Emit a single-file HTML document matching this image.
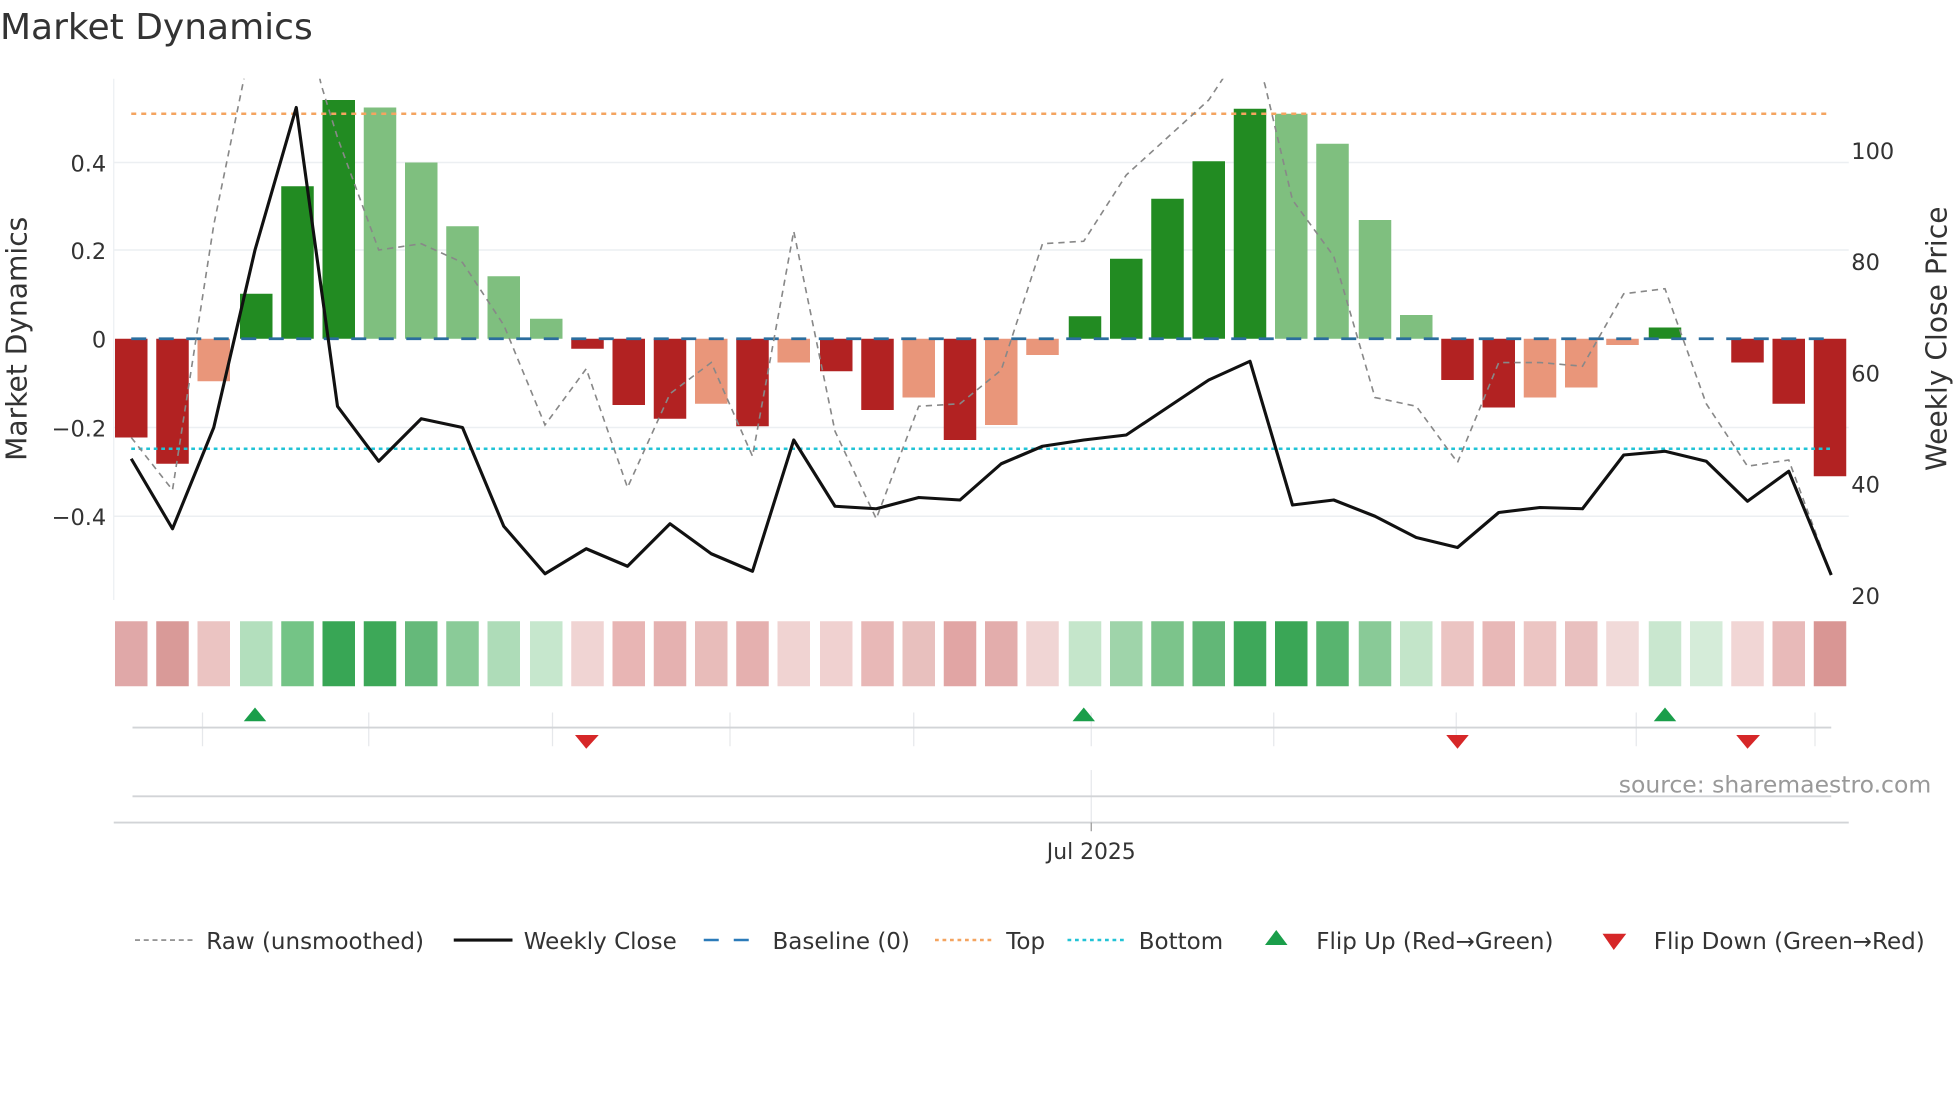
<!DOCTYPE html>
<html><head><meta charset="utf-8"><style>
html,body{margin:0;padding:0;background:#fff;width:1960px;height:1102px;overflow:hidden}
svg{display:block}
text{font-family:"DejaVu Sans","Liberation Sans",sans-serif;fill:#333}
</style></head><body>
<svg width="1960" height="1102" viewBox="0 0 1568 881.6" xmlns="http://www.w3.org/2000/svg">
<defs><clipPath id="pc"><rect x="91" y="63" width="1388" height="420"/></clipPath></defs>
<text x="0" y="31" font-size="28.8">Market Dynamics</text>
<g stroke="#eceff2" stroke-width="1.2">
<line x1="91" y1="130" x2="1479" y2="130"/><line x1="91" y1="200" x2="1479" y2="200"/>
<line x1="91" y1="342" x2="1479" y2="342"/><line x1="91" y1="413" x2="1479" y2="413"/>
</g>
<line x1="91" y1="63" x2="91" y2="480" stroke="#eceff2"/>
<g font-size="18" text-anchor="end">
<text x="85" y="137">0.4</text><text x="85" y="207">0.2</text><text x="85" y="278">0</text>
<text x="85" y="349">−0.2</text><text x="85" y="420">−0.4</text>
</g>
<g font-size="18">
<text x="1481" y="127">100</text><text x="1481" y="216">80</text><text x="1481" y="305">60</text>
<text x="1481" y="394">40</text><text x="1481" y="483">20</text>
</g>
<text transform="translate(21,271) rotate(-90)" font-size="22.5" text-anchor="middle">Market Dynamics</text>
<text transform="translate(1557,271) rotate(-90)" font-size="22.5" text-anchor="middle">Weekly Close Price</text>
<g>
<rect x="92" y="271" width="26" height="79" fill="#b22222"/>
<rect x="125" y="271" width="26" height="100" fill="#b22222"/>
<rect x="158" y="271" width="26" height="34" fill="#e9967a"/>
<rect x="192" y="235" width="26" height="36" fill="#228b22"/>
<rect x="225" y="149" width="26" height="122" fill="#228b22"/>
<rect x="258" y="80" width="26" height="191" fill="#228b22"/>
<rect x="291" y="86" width="26" height="185" fill="#7fbf7f"/>
<rect x="324" y="130" width="26" height="141" fill="#7fbf7f"/>
<rect x="357" y="181" width="26" height="90" fill="#7fbf7f"/>
<rect x="390" y="221" width="26" height="50" fill="#7fbf7f"/>
<rect x="424" y="255" width="26" height="16" fill="#7fbf7f"/>
<rect x="457" y="271" width="26" height="8" fill="#b22222"/>
<rect x="490" y="271" width="26" height="53" fill="#b22222"/>
<rect x="523" y="271" width="26" height="64" fill="#b22222"/>
<rect x="556" y="271" width="26" height="52" fill="#e9967a"/>
<rect x="589" y="271" width="26" height="70" fill="#b22222"/>
<rect x="622" y="271" width="26" height="19" fill="#e9967a"/>
<rect x="656" y="271" width="26" height="26" fill="#b22222"/>
<rect x="689" y="271" width="26" height="57" fill="#b22222"/>
<rect x="722" y="271" width="26" height="47" fill="#e9967a"/>
<rect x="755" y="271" width="26" height="81" fill="#b22222"/>
<rect x="788" y="271" width="26" height="69" fill="#e9967a"/>
<rect x="821" y="271" width="26" height="13" fill="#e9967a"/>
<rect x="855" y="253" width="26" height="18" fill="#228b22"/>
<rect x="888" y="207" width="26" height="64" fill="#228b22"/>
<rect x="921" y="159" width="26" height="112" fill="#228b22"/>
<rect x="954" y="129" width="26" height="142" fill="#228b22"/>
<rect x="987" y="87" width="26" height="184" fill="#228b22"/>
<rect x="1020" y="91" width="26" height="180" fill="#7fbf7f"/>
<rect x="1053" y="115" width="26" height="156" fill="#7fbf7f"/>
<rect x="1087" y="176" width="26" height="95" fill="#7fbf7f"/>
<rect x="1120" y="252" width="26" height="19" fill="#7fbf7f"/>
<rect x="1153" y="271" width="26" height="33" fill="#b22222"/>
<rect x="1186" y="271" width="26" height="55" fill="#b22222"/>
<rect x="1219" y="271" width="26" height="47" fill="#e9967a"/>
<rect x="1252" y="271" width="26" height="39" fill="#e9967a"/>
<rect x="1285" y="271" width="26" height="5" fill="#e9967a"/>
<rect x="1319" y="262" width="26" height="9" fill="#228b22"/>
<rect x="1385" y="271" width="26" height="19" fill="#b22222"/>
<rect x="1418" y="271" width="26" height="52" fill="#b22222"/>
<rect x="1451" y="271" width="26" height="110" fill="#b22222"/>
</g>
<line x1="105" y1="91" x2="1465" y2="91" stroke="#f4a460" stroke-width="2" stroke-dasharray="4,4"/>
<line x1="105" y1="359" x2="1465" y2="359" stroke="#22c3d6" stroke-width="2" stroke-dasharray="3,3"/>
<line x1="105" y1="271" x2="1465" y2="271" stroke="#2b6d9e" stroke-width="2.2" stroke-dasharray="12,10"/>
<polyline clip-path="url(#pc)" fill="none" stroke="#888" stroke-width="1.3" stroke-dasharray="5,4" points="105,350 138,392 171,180 204,20 237,-20 257,68 270,110 303,200 337,195 370,210 403,260 436,340 469,295 502,390 536,315 569,290 602,365 635,185 668,345 701,415 735,325 768,323 801,296 834,195 867,193 901,140 934,110 967,80 1000,30 1012,68 1034,160 1067,205 1100,318 1133,325 1166,370 1199,290 1232,290 1266,293 1299,235 1332,231 1365,323 1398,373 1431,368 1465,460"/>
<polyline fill="none" stroke="#111" stroke-width="2.5" stroke-linejoin="round" points="105,367 138,423 171,342 204,200 237,86 270,325 303,369 337,335 370,342 403,421 436,459 469,439 502,453 536,419 569,443 602,457 635,352 668,405 701,407 735,398 768,400 801,371 834,357 867,352 901,348 934,326 967,304 1000,289 1034,404 1067,400 1100,413 1133,430 1166,438 1199,410 1232,406 1266,407 1299,364 1332,361 1365,369 1398,401 1431,377 1465,460"/>
<g>
<rect x="92" y="497" width="26" height="52" fill="#e0a8a8"/>
<rect x="125" y="497" width="26" height="52" fill="#d99a98"/>
<rect x="158" y="497" width="26" height="52" fill="#ebc4c2"/>
<rect x="192" y="497" width="26" height="52" fill="#b3dfbd"/>
<rect x="225" y="497" width="26" height="52" fill="#74c486"/>
<rect x="258" y="497" width="26" height="52" fill="#38a655"/>
<rect x="291" y="497" width="26" height="52" fill="#3da858"/>
<rect x="324" y="497" width="26" height="52" fill="#65b97a"/>
<rect x="357" y="497" width="26" height="52" fill="#8acb98"/>
<rect x="390" y="497" width="26" height="52" fill="#aedcb8"/>
<rect x="424" y="497" width="26" height="52" fill="#c6e7cd"/>
<rect x="457" y="497" width="26" height="52" fill="#f0d4d3"/>
<rect x="490" y="497" width="26" height="52" fill="#e8b5b4"/>
<rect x="523" y="497" width="26" height="52" fill="#e5b1b0"/>
<rect x="556" y="497" width="26" height="52" fill="#e8bcba"/>
<rect x="589" y="497" width="26" height="52" fill="#e5b0af"/>
<rect x="622" y="497" width="26" height="52" fill="#f0d3d2"/>
<rect x="656" y="497" width="26" height="52" fill="#f0d1d0"/>
<rect x="689" y="497" width="26" height="52" fill="#e8b8b7"/>
<rect x="722" y="497" width="26" height="52" fill="#e8c0be"/>
<rect x="755" y="497" width="26" height="52" fill="#e1a5a4"/>
<rect x="788" y="497" width="26" height="52" fill="#e3adac"/>
<rect x="821" y="497" width="26" height="52" fill="#f0d5d4"/>
<rect x="855" y="497" width="26" height="52" fill="#c5e6cb"/>
<rect x="888" y="497" width="26" height="52" fill="#9fd4aa"/>
<rect x="921" y="497" width="26" height="52" fill="#7cc48b"/>
<rect x="954" y="497" width="26" height="52" fill="#62b777"/>
<rect x="987" y="497" width="26" height="52" fill="#3ea85a"/>
<rect x="1020" y="497" width="26" height="52" fill="#3aa656"/>
<rect x="1053" y="497" width="26" height="52" fill="#58b46f"/>
<rect x="1087" y="497" width="26" height="52" fill="#89ca97"/>
<rect x="1120" y="497" width="26" height="52" fill="#c3e5c9"/>
<rect x="1153" y="497" width="26" height="52" fill="#ebc4c2"/>
<rect x="1186" y="497" width="26" height="52" fill="#e8b8b7"/>
<rect x="1219" y="497" width="26" height="52" fill="#ecc5c3"/>
<rect x="1252" y="497" width="26" height="52" fill="#e9c0bf"/>
<rect x="1285" y="497" width="26" height="52" fill="#f1dad9"/>
<rect x="1319" y="497" width="26" height="52" fill="#c9e7cf"/>
<rect x="1352" y="497" width="26" height="52" fill="#d5ecd9"/>
<rect x="1385" y="497" width="26" height="52" fill="#f1d6d5"/>
<rect x="1418" y="497" width="26" height="52" fill="#e8bab9"/>
<rect x="1451" y="497" width="26" height="52" fill="#d99694"/>
</g>
<g stroke="#e6e8eb" stroke-width="1">
<line x1="162" y1="570" x2="162" y2="597"/><line x1="295" y1="570" x2="295" y2="597"/>
<line x1="442" y1="570" x2="442" y2="597"/><line x1="584" y1="570" x2="584" y2="597"/>
<line x1="731" y1="570" x2="731" y2="597"/><line x1="873" y1="570" x2="873" y2="597"/>
<line x1="1019" y1="570" x2="1019" y2="597"/><line x1="1165" y1="570" x2="1165" y2="597"/>
<line x1="1309" y1="570" x2="1309" y2="597"/><line x1="1452" y1="570" x2="1452" y2="597"/>
<line x1="873" y1="616" x2="873" y2="658"/>
</g>
<line x1="106" y1="582" x2="1465" y2="582" stroke="#d2d4d7" stroke-width="1.5"/>
<g fill="#1a9e4a">
<polygon points="204,566 213,577 195,577"/><polygon points="867,566 876,577 858,577"/><polygon points="1332,566 1341,577 1323,577"/>
</g>
<g fill="#d62728">
<polygon points="460,588 479,588 469,599"/><polygon points="1157,588 1175,588 1166,599"/><polygon points="1389,588 1408,588 1398,599"/>
</g>
<line x1="106" y1="637" x2="1465" y2="637" stroke="#d2d4d7" stroke-width="1.5"/>
<line x1="91" y1="658" x2="1479" y2="658" stroke="#d2d4d7" stroke-width="1.5"/>
<line x1="873" y1="658" x2="873" y2="665" stroke="#999"/>
<text x="873" y="687" font-size="17.5" text-anchor="middle">Jul 2025</text>
<text x="1545" y="634" font-size="18.8" text-anchor="end" style="fill:#999">source: sharemaestro.com</text>
<g font-size="18.4">
<line x1="108" y1="752" x2="154" y2="752" stroke="#888" stroke-width="1.3" stroke-dasharray="4,3"/>
<text x="165" y="759">Raw (unsmoothed)</text>
<line x1="363" y1="752" x2="410" y2="752" stroke="#111" stroke-width="2.5"/>
<text x="419" y="759">Weekly Close</text>
<line x1="563" y1="752" x2="609" y2="752" stroke="#2b7bb9" stroke-width="2" stroke-dasharray="12,12"/>
<text x="618" y="759">Baseline (0)</text>
<line x1="748" y1="752" x2="794" y2="752" stroke="#f4a460" stroke-width="2" stroke-dasharray="3,3"/>
<text x="805" y="759">Top</text>
<line x1="854" y1="752" x2="900" y2="752" stroke="#22c3d6" stroke-width="2" stroke-dasharray="3,3"/>
<text x="911" y="759">Bottom</text>
<polygon points="1021,744 1030,756 1012,756" fill="#1a9e4a"/>
<text x="1053" y="759">Flip Up (Red→Green)</text>
<polygon points="1282,747 1301,747 1291,760" fill="#d62728"/>
<text x="1323" y="759">Flip Down (Green→Red)</text>
</g>
</svg>
</body></html>
